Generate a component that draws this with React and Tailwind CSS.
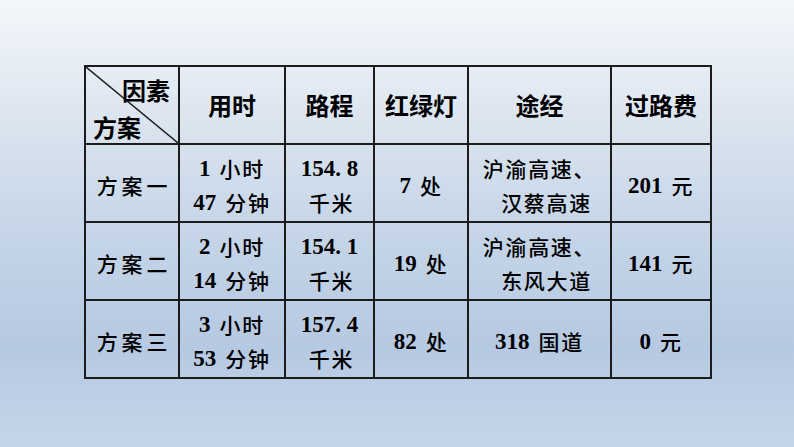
const N = ({ children, gap = true }) => (
  <span className={"font-['Liberation_Serif',serif] font-bold text-[23px] leading-none " + (gap ? "mr-[9px]" : "")}>{children}</span>
);
const C = ({ children, className = "" }) => (
  <span className={"font-['Noto_Sans_CJK_SC',sans-serif] font-medium text-[21px] leading-none tracking-[0.08em] " + className}>{children}</span>
);

const Line = ({ children }) => (
  <div className="h-[34px] flex items-center justify-center whitespace-nowrap">{children}</div>
);

const Two = ({ a, b }) => (
  <div className="h-[76px] flex flex-col items-center justify-center pt-[5px]">
    <Line>{a}</Line>
    <Line>{b}</Line>
  </div>
);

const One = ({ children }) => (
  <div className="h-[76px] flex items-center justify-center pt-[5px] whitespace-nowrap">{children}</div>
);

export default function App() {
  const rows = [
    {
      name: "方案一",
      time: <Two a={<><N>1</N><C>小时</C></>} b={<><N>47</N><C>分钟</C></>} />,
      dist: <Two a={<N gap={false}>154. 8</N>} b={<C className="tracking-[0.2em] pl-[4px]">千米</C>} />,
      light: <One><N>7</N><C>处</C></One>,
      route: <Two a={<C>沪渝高速、</C>} b={<C className="pl-[14px]">汉蔡高速</C>} />,
      fee: <One><N>201</N><C>元</C></One>,
    },
    {
      name: "方案二",
      time: <Two a={<><N>2</N><C>小时</C></>} b={<><N>14</N><C>分钟</C></>} />,
      dist: <Two a={<N gap={false}>154. 1</N>} b={<C className="tracking-[0.2em] pl-[4px]">千米</C>} />,
      light: <One><N>19</N><C>处</C></One>,
      route: <Two a={<C>沪渝高速、</C>} b={<C className="pl-[14px]">东风大道</C>} />,
      fee: <One><N>141</N><C>元</C></One>,
    },
    {
      name: "方案三",
      time: <Two a={<><N>3</N><C>小时</C></>} b={<><N>53</N><C>分钟</C></>} />,
      dist: <Two a={<N gap={false}>157. 4</N>} b={<C className="tracking-[0.2em] pl-[4px]">千米</C>} />,
      light: <One><N>82</N><C>处</C></One>,
      route: <One><N>318</N><C>国道</C></One>,
      fee: <One><N>0</N><C>元</C></One>,
    },
  ];
  const th = "border-2 border-[#1c1c1c] text-center align-middle font-['Noto_Sans_CJK_SC',sans-serif] font-bold text-[24px] text-black p-0";
  const td = "border-2 border-[#1c1c1c] text-center align-middle text-black p-0 whitespace-nowrap";
  return (
    <div className="w-[794px] h-[447px] overflow-hidden bg-[linear-gradient(to_bottom,#f4f7fb_0%,#dde6f0_25%,#c7d6e8_50%,#b6c9e2_78%,#c6d6e9_100%)] pt-[65px] pl-[84px]">
      <table className="border-collapse table-fixed w-[626px]">
        <colgroup>
          <col className="w-[94px]" />
          <col className="w-[106px]" />
          <col className="w-[89px]" />
          <col className="w-[94px]" />
          <col className="w-[143px]" />
          <col className="w-[100px]" />
        </colgroup>
        <thead>
          <tr className="h-[78px]">
            <th className={th + " relative"}>
              <svg className="absolute inset-0 w-full h-full" preserveAspectRatio="none" viewBox="0 0 100 100">
                <line x1="0" y1="0" x2="100" y2="100" stroke="#1c1c1c" strokeWidth="1.4" vectorEffect="non-scaling-stroke" />
              </svg>
              <div className="flex flex-col h-[76px] leading-[24px] pt-[11px] relative">
                <div className="text-right pr-[8px]">因素</div>
                <div className="text-left pl-[7px] pt-[13px]">方案</div>
              </div>
            </th>
            <th className={th}>用时</th>
            <th className={th}>路程</th>
            <th className={th}>红绿灯</th>
            <th className={th}>途经</th>
            <th className={th}>过路费</th>
          </tr>
        </thead>
        <tbody>
          {rows.map((r, i) => (
            <tr key={i} className="h-[78px]">
              <td className={td}><One><C className="tracking-[0.18em] pl-[4px]">{r.name}</C></One></td>
              <td className={td}>{r.time}</td>
              <td className={td}>{r.dist}</td>
              <td className={td}>{r.light}</td>
              <td className={td}>{r.route}</td>
              <td className={td}>{r.fee}</td>
            </tr>
          ))}
        </tbody>
      </table>
    </div>
  );
}
